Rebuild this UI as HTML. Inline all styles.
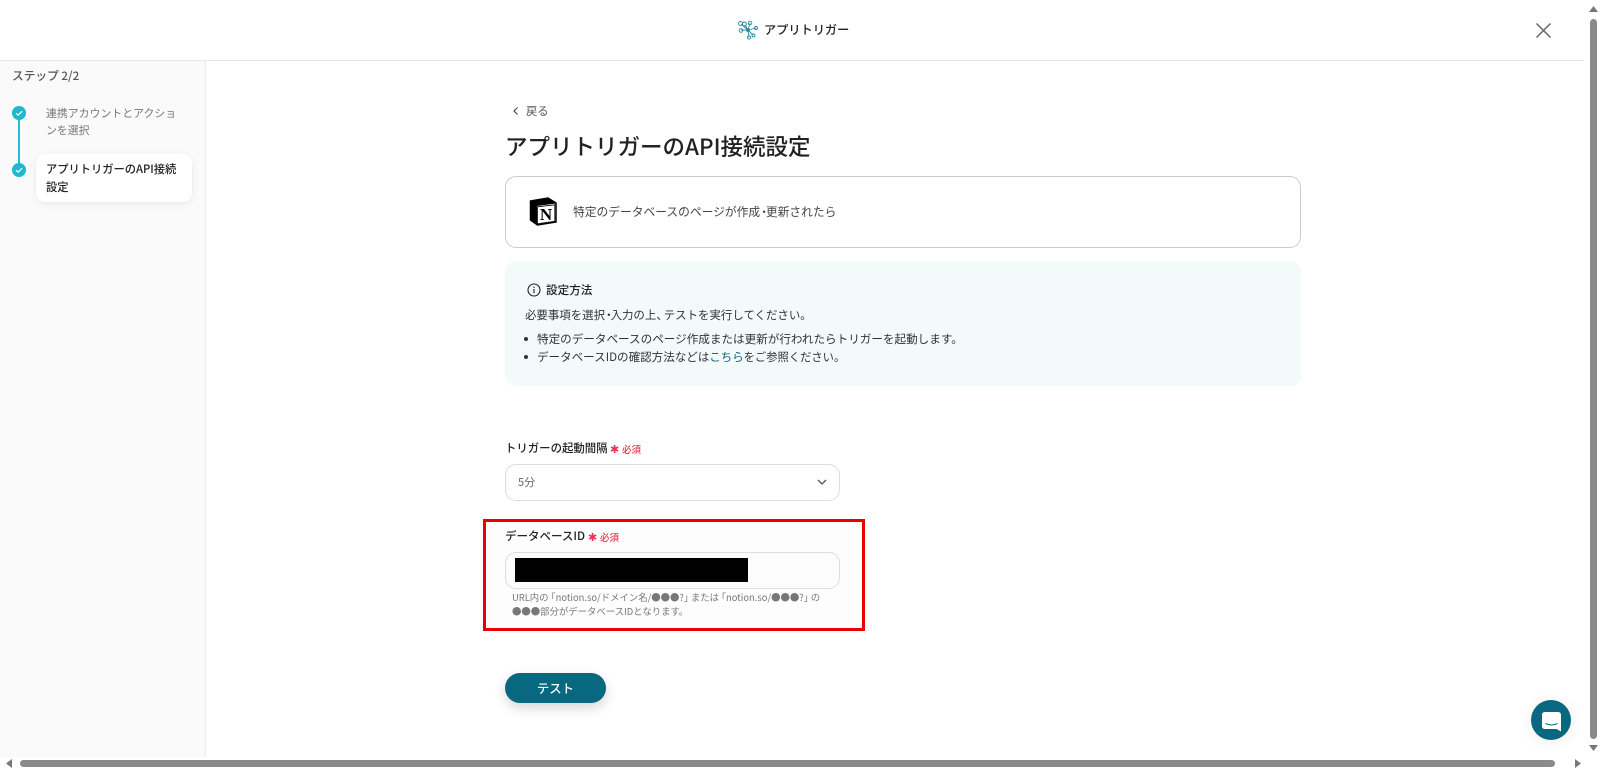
<!DOCTYPE html>
<html lang="ja"><head><meta charset="utf-8"><title>アプリトリガー</title>
<style>
*{box-sizing:border-box;margin:0;padding:0}
html,body{width:1600px;height:770px;overflow:hidden;background:#fff}
body{position:relative;font-family:"Noto Sans CJK JP","Liberation Sans",sans-serif;color:#222}
.a{position:absolute;white-space:nowrap;line-height:1}
.box{position:absolute}
.req{color:#e8344e;font-size:9.5px;font-weight:500}
.ast{color:#e8344e;font-size:11px}
.n{letter-spacing:-.35em}
.l{margin-left:-.25em}
.r{letter-spacing:-.25em}
</style></head><body>
<div class="box" style="left:0;top:60px;width:1600px;height:1px;background:#e6e6e6"></div>
<div class="box" style="left:0;top:61px;width:206px;height:709px;background:#fafafa;border-right:1px solid #ececec"></div>

<svg class="box" style="left:737px;top:20px" width="21" height="20" viewBox="0 0 21 20" fill="none" stroke="#2b8aa0" stroke-width=".9"><path d="M4 4 L11 10 M8 5 L11 10 M13 3 L11 10 M11 10 L19 8 M11 10 L16 15 M11 10 L12 17 M11 10 L4 10"/><circle cx="3.500" cy="3.500" r="2"/><circle cx="7.500" cy="4" r="2"/><circle cx="13" cy="3" r="1.800"/><circle cx="19" cy="8" r="1.500"/><circle cx="16.500" cy="15.500" r="1.500"/><circle cx="12" cy="17.500" r="1.600"/><circle cx="4" cy="10.500" r="1.800"/><circle cx="11" cy="10" r="1.500" fill="#2b8aa0"/></svg>
<div class="a" style="left:764px;top:23px;font-size:12.200px;font-weight:500;color:#222">アプリトリガー</div>
<svg class="box" style="left:1535px;top:22px" width="17" height="17" viewBox="0 0 17 17" stroke="#666" stroke-width="1.500"><path d="M1.500 1.500 L15.500 15.500 M15.500 1.500 L1.500 15.500"/></svg>

<div class="a" style="left:12px;top:70px;font-size:11.700px;font-weight:500;color:#555">ステップ 2/2</div>
<div class="box" style="left:18px;top:113px;width:2px;height:57px;background:#1fc0d4"></div>
<svg class="box" style="left:12px;top:106px" width="14" height="14" viewBox="0 0 14 14"><circle cx="7" cy="7" r="7" fill="#1fb8cc"/><path d="M4 7.200 L6.200 9.200 L10 5.200" fill="none" stroke="#fff" stroke-width="1.200"/></svg>
<svg class="box" style="left:12px;top:163px" width="14" height="14" viewBox="0 0 14 14"><circle cx="7" cy="7" r="7" fill="#1fb8cc"/><path d="M4 7.200 L6.200 9.200 L10 5.200" fill="none" stroke="#fff" stroke-width="1.200"/></svg>
<div class="a" style="left:46px;top:108px;font-size:10.900px;color:#777">連携アカウントとアクショ</div>
<div class="a" style="left:46px;top:125px;font-size:10.900px;color:#777">ンを選択</div>
<div class="box" style="left:36px;top:154px;width:156px;height:48px;background:#fff;border-radius:9px;box-shadow:0 2px 8px rgba(0,0,0,.07)"></div>
<div class="a" style="left:46px;top:164px;font-size:11.250px;font-weight:500;color:#222">アプリトリガーのAPI接続</div>
<div class="a" style="left:46px;top:182px;font-size:11.250px;font-weight:500;color:#222">設定</div>

<svg class="box" style="left:512px;top:106px" width="8" height="10" viewBox="0 0 8 10" fill="none" stroke="#444" stroke-width="1.100"><path d="M5.500 1.500 L2 5 L5.500 8.500"/></svg>
<div class="a" style="left:526px;top:106px;font-size:11.300px;color:#555">戻る</div>
<div class="a" style="left:505px;top:135px;font-size:22.500px;font-weight:500;color:#222">アプリトリガーのAPI接続設定</div>

<div class="box" style="left:505px;top:176px;width:796px;height:72px;border:1px solid #ccc;border-radius:11px;background:#fff"></div>
<svg class="box" style="left:529px;top:197px" width="28" height="29" viewBox="0 0 28 29"><path d="M1.500 4 L19 1 L27 6 L27 25 L8.500 28 L1.500 23 Z" fill="#fff" stroke="#000" stroke-width="1.500"/><path d="M1 4 L8 9 L8 28 L1 23 Z M8 9 L27 6.500 L19 1 L1 4 Z" fill="#000"/><path d="M8.500 9.800 L25.800 7.800 L25.800 24.300 L8.500 26.800 Z" fill="#fff" stroke="#000" stroke-width=".8"/><text x="17" y="23" font-family="Liberation Serif,serif" font-size="17" font-weight="700" text-anchor="middle" fill="#000">N</text></svg>
<div class="a" style="left:573px;top:206px;font-size:11.750px;color:#444">特定のデータベースのページが作成<span class="n" style="margin-left:-.17em">・</span>更新されたら</div>

<div class="box" style="left:505px;top:261px;width:796px;height:125px;background:#f2fafa;border-radius:11px"></div>
<svg class="box" style="left:527px;top:283px" width="14" height="14" viewBox="0 0 14 14" fill="none" stroke="#222" stroke-width="1.100"><circle cx="7" cy="7" r="6"/><path d="M7 6 V10.300 M7 3.600 V5"/></svg>
<div class="a" style="left:546px;top:285px;font-size:11.600px;font-weight:500;color:#222">設定方法</div>
<div class="a" style="left:525px;top:310px;font-size:11.450px;color:#333">必要事項を選択<span class="n" style="margin-left:-.17em">・</span>入力の上<span class="n">、</span>テストを実行してください。</div>
<div class="box" style="left:524px;top:337px;width:4px;height:4px;border-radius:50%;background:#333"></div>
<div class="box" style="left:524px;top:355px;width:4px;height:4px;border-radius:50%;background:#333"></div>
<div class="a" style="left:537px;top:334px;font-size:11.580px;color:#333">特定のデータベースのページ作成または更新が行われたらトリガーを起動します。</div>
<div class="a" style="left:537px;top:352px;font-size:11.550px;color:#333">データベースIDの確認方法などは<span style="color:#07687f;font-size:11.400px">こちら</span><span style="font-size:11.300px">をご参照ください。</span></div>

<div class="a" style="left:505px;top:443px;font-size:11.400px;font-weight:500;color:#222">トリガーの起動間隔</div>
<div class="a ast" style="left:610px;top:444px">✱</div>
<div class="a req" style="left:622px;top:445px">必須</div>
<div class="box" style="left:505px;top:464px;width:335px;height:37px;border:1px solid #ddd;border-radius:11px;background:#fff"></div>
<div class="a" style="left:518px;top:477px;font-size:11px;color:#666">5分</div>
<svg class="box" style="left:817px;top:479px" width="10" height="7" viewBox="0 0 10 7" fill="none" stroke="#555" stroke-width="1.300"><path d="M1 1 L5 5 L9 1"/></svg>

<div class="box" style="left:483px;top:519px;width:382px;height:112px;border:3px solid #ea0000;background:#fdfdfd"></div>
<div class="a" style="left:505px;top:531px;font-size:11.500px;font-weight:500;color:#222">データベースID</div>
<div class="a ast" style="left:588px;top:532px">✱</div>
<div class="a req" style="left:600px;top:533px">必須</div>
<div class="box" style="left:505px;top:552px;width:335px;height:37px;border:1px solid #ddd;border-radius:11px;background:#fcfcfc"></div>
<div class="box" style="left:515px;top:558px;width:233px;height:24px;background:#000"></div>
<div class="a" style="left:512px;top:593px;font-size:9.400px;color:#777">URL内の<span class="l">「</span>notion.so/ドメイン名/●●●?<span class="r">」</span>または<span class="l">「</span>notion.so/●●●?<span class="r">」</span>の</div>
<div class="a" style="left:512px;top:607px;font-size:9.400px;color:#777">●●●部分がデータベースIDとなります。</div>

<div class="box" style="left:505px;top:673px;width:101px;height:30px;border-radius:15px;background:#07687f;box-shadow:0 5px 12px rgba(0,0,0,.16)"></div>
<div class="a" style="left:505px;top:682px;width:101px;text-align:center;font-size:12.400px;font-weight:500;color:#fff">テスト</div>

<div class="box" style="left:1531px;top:700px;width:40px;height:40px;border-radius:50%;background:#07687f;box-shadow:0 2px 14px rgba(0,0,0,.08)"></div>
<svg class="box" style="left:1541.500px;top:711.500px" width="19" height="20" viewBox="0 0 19 20"><path d="M3 0 H16 Q19 0 19 3 V19.500 L14.500 17 H3 Q0 17 0 14 V3 Q0 0 3 0 Z" fill="#fff"/><path d="M3.500 11.500 Q9.500 14.500 15.500 11.500" fill="none" stroke="#07687f" stroke-width="1"/></svg>

<div class="box" style="left:1584px;top:0;width:16px;height:770px;background:#fff"></div>
<div class="box" style="left:0;top:757px;width:1600px;height:13px;background:#fff"></div>
<div class="box" style="left:1590px;top:19px;width:7px;height:720px;border-radius:4px;background:#8a8a8a"></div>
<div class="box" style="left:20px;top:760px;width:1535px;height:7px;border-radius:4px;background:#8a8a8a"></div>
<svg class="box" style="left:1589px;top:6px" width="9" height="6"><path d="M0 6 L4.500 0 L9 6 Z" fill="#777"/></svg>
<svg class="box" style="left:1589px;top:745px" width="9" height="6"><path d="M0 0 L4.500 6 L9 0 Z" fill="#777"/></svg>
<svg class="box" style="left:6px;top:759px" width="6" height="9"><path d="M6 0 L0 4.500 L6 9 Z" fill="#777"/></svg>
<svg class="box" style="left:1575px;top:759px" width="6" height="9"><path d="M0 0 L6 4.500 L0 9 Z" fill="#777"/></svg>
</body></html>
